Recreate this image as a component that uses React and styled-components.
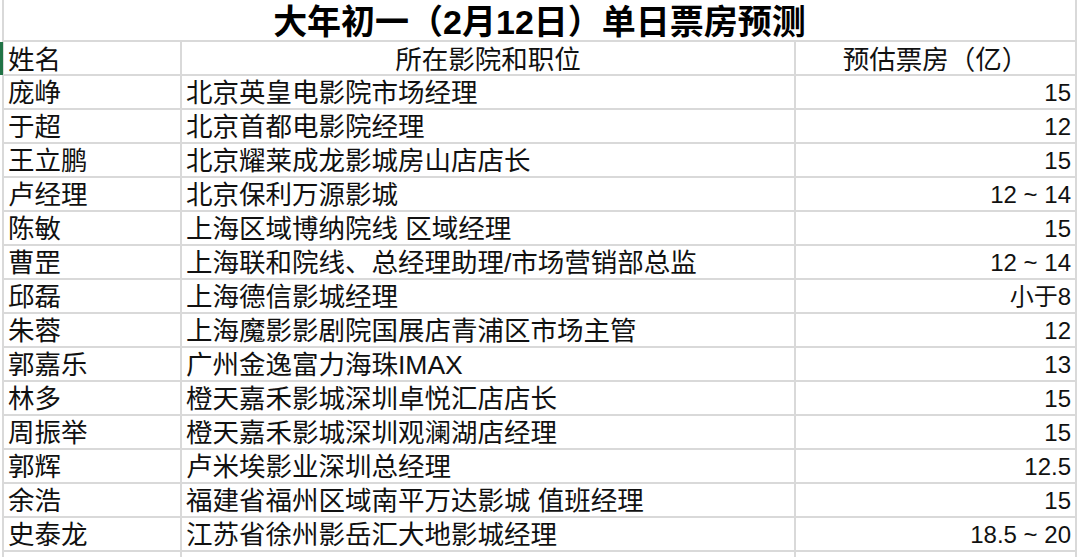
import React from "react";
import styled, { createGlobalStyle } from "styled-components";

const GlobalStyle = createGlobalStyle`
  html, body { margin: 0; padding: 0; background: #ffffff; }
  body { font-family: "Liberation Sans", "Noto Sans CJK SC", sans-serif; color: #111; }
`;

const LINE = "#d9d9d9";

const Page = styled.div`
  width: 1080px;
  height: 557px;
  overflow: hidden;
  background: #fff;
  padding-left: 2px;
  box-sizing: border-box;
`;

const Sheet = styled.div`
  width: 1075px;
  box-sizing: border-box;
  display: flex;
  flex-direction: column;
  border-left: 2px solid ${LINE};
  border-right: 2px solid ${LINE};
`;

const TitleRow = styled.div`
  height: 42px;
  box-sizing: border-box;
  border-bottom: 2px solid ${LINE};
  display: flex;
  align-items: center;
  justify-content: center;
  padding-top: 3px;
  font-family: "Liberation Sans", "Noto Sans CJK SC", sans-serif;
  font-weight: 700;
  font-size: 34px;
  line-height: 36px;
  color: #000;
`;

const Row = styled.div`
  position: relative;
  height: 34px;
  box-sizing: border-box;
  border-bottom: 2px solid ${LINE};
  display: grid;
  grid-template-columns: 176px 614px 1fr;

  &::before {
    content: "";
    display: ${(p) => (p.$selected ? "block" : "none")};
    position: absolute;
    left: -4px;
    top: 0;
    bottom: -1px;
    width: 3px;
    background: #217346;
  }
`;

const Cell = styled.div`
  display: flex;
  align-items: center;
  justify-content: ${(p) =>
    p.$align === "right" ? "flex-end" : p.$align === "center" ? "center" : "flex-start"};
  padding: ${(p) => (p.$header ? "4px 4px 0 4px" : "1px 4px 0 4px")};
  border-left: ${(p) => (p.$first ? "none" : `2px solid ${LINE}`)};
  font-size: 26.5px;
  line-height: 30px;
  white-space: nowrap;
  overflow: hidden;
  color: #111;
`;

const Num = styled.span`
  font-size: 24px;
  font-family: "Liberation Sans", "Noto Sans CJK SC", sans-serif;
`;

const rows = [
  ["庞峥", "北京英皇电影院市场经理", "15"],
  ["于超", "北京首都电影院经理", "12"],
  ["王立鹏", "北京耀莱成龙影城房山店店长", "15"],
  ["卢经理", "北京保利万源影城", "12 ~ 14"],
  ["陈敏", "上海区域博纳院线 区域经理", "15"],
  ["曹罡", "上海联和院线、总经理助理/市场营销部总监", "12 ~ 14"],
  ["邱磊", "上海德信影城经理", "小于8"],
  ["朱蓉", "上海魔影影剧院国展店青浦区市场主管", "12"],
  ["郭嘉乐", "广州金逸富力海珠IMAX", "13"],
  ["林多", "橙天嘉禾影城深圳卓悦汇店店长", "15"],
  ["周振举", "橙天嘉禾影城深圳观澜湖店经理", "15"],
  ["郭辉", "卢米埃影业深圳总经理", "12.5"],
  ["余浩", "福建省福州区域南平万达影城 值班经理", "15"],
  ["史泰龙", "江苏省徐州影岳汇大地影城经理", "18.5 ~ 20"],
];

export default function App() {
  return (
    <>
      <GlobalStyle />
      <Page>
        <Sheet>
          <TitleRow>大年初一（2月12日）单日票房预测</TitleRow>
          <Row $selected>
            <Cell $first $header>姓名</Cell>
            <Cell $header $align="center">所在影院和职位</Cell>
            <Cell $header $align="center">预估票房（亿）</Cell>
          </Row>
          {rows.map(([name, place, value]) => (
            <Row key={name}>
              <Cell $first>{name}</Cell>
              <Cell>{place}</Cell>
              <Cell $align="right">
                <Num>{value}</Num>
              </Cell>
            </Row>
          ))}
          <Row>
            <Cell $first />
            <Cell />
            <Cell />
          </Row>
        </Sheet>
      </Page>
    </>
  );
}
